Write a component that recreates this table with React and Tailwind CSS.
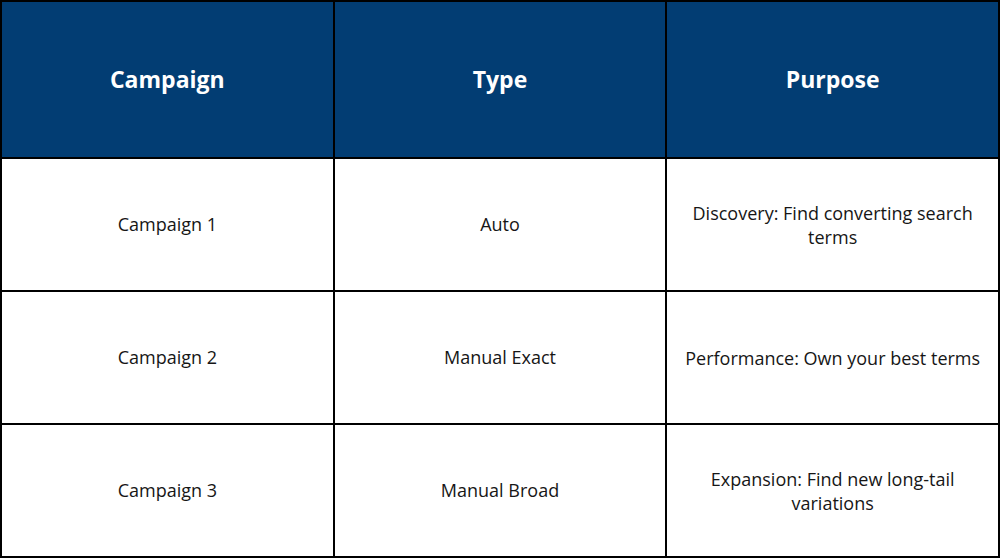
import { Fragment } from 'react';

const rows = [
  { campaign: 'Campaign 1', type: 'Auto', purpose: 'Discovery: Find converting search terms' },
  { campaign: 'Campaign 2', type: 'Manual Exact', purpose: 'Performance: Own your best terms' },
  { campaign: 'Campaign 3', type: 'Manual Broad', purpose: 'Expansion: Find new long-tail variations' },
];

export default function App() {
  return (
    <div className="w-[1000px] h-[558px] bg-black p-[2px] grid grid-cols-3 grid-rows-[155px_1fr_1fr_1fr] gap-[2px] font-['Open_Sans',sans-serif]">
      {/* Header */}
      {['Campaign', 'Type', 'Purpose'].map((h) => (
        <div key={h} className="bg-[#023d73] flex items-center justify-center text-white text-[23px] font-bold">
          {h}
        </div>
      ))}

      {rows.map((row) => (
        <Fragment key={row.campaign}>
          <div className="bg-white flex items-center justify-center text-[18px] text-[#161616]">
            {row.campaign}
          </div>
          <div className="bg-white flex items-center justify-center text-[18px] text-[#161616]">
            {row.type}
          </div>
          <div className="bg-white flex items-center justify-center px-3 text-center text-[18px] leading-6 text-[#161616]">
            {row.purpose}
          </div>
        </Fragment>
      ))}
    </div>
  );
}
